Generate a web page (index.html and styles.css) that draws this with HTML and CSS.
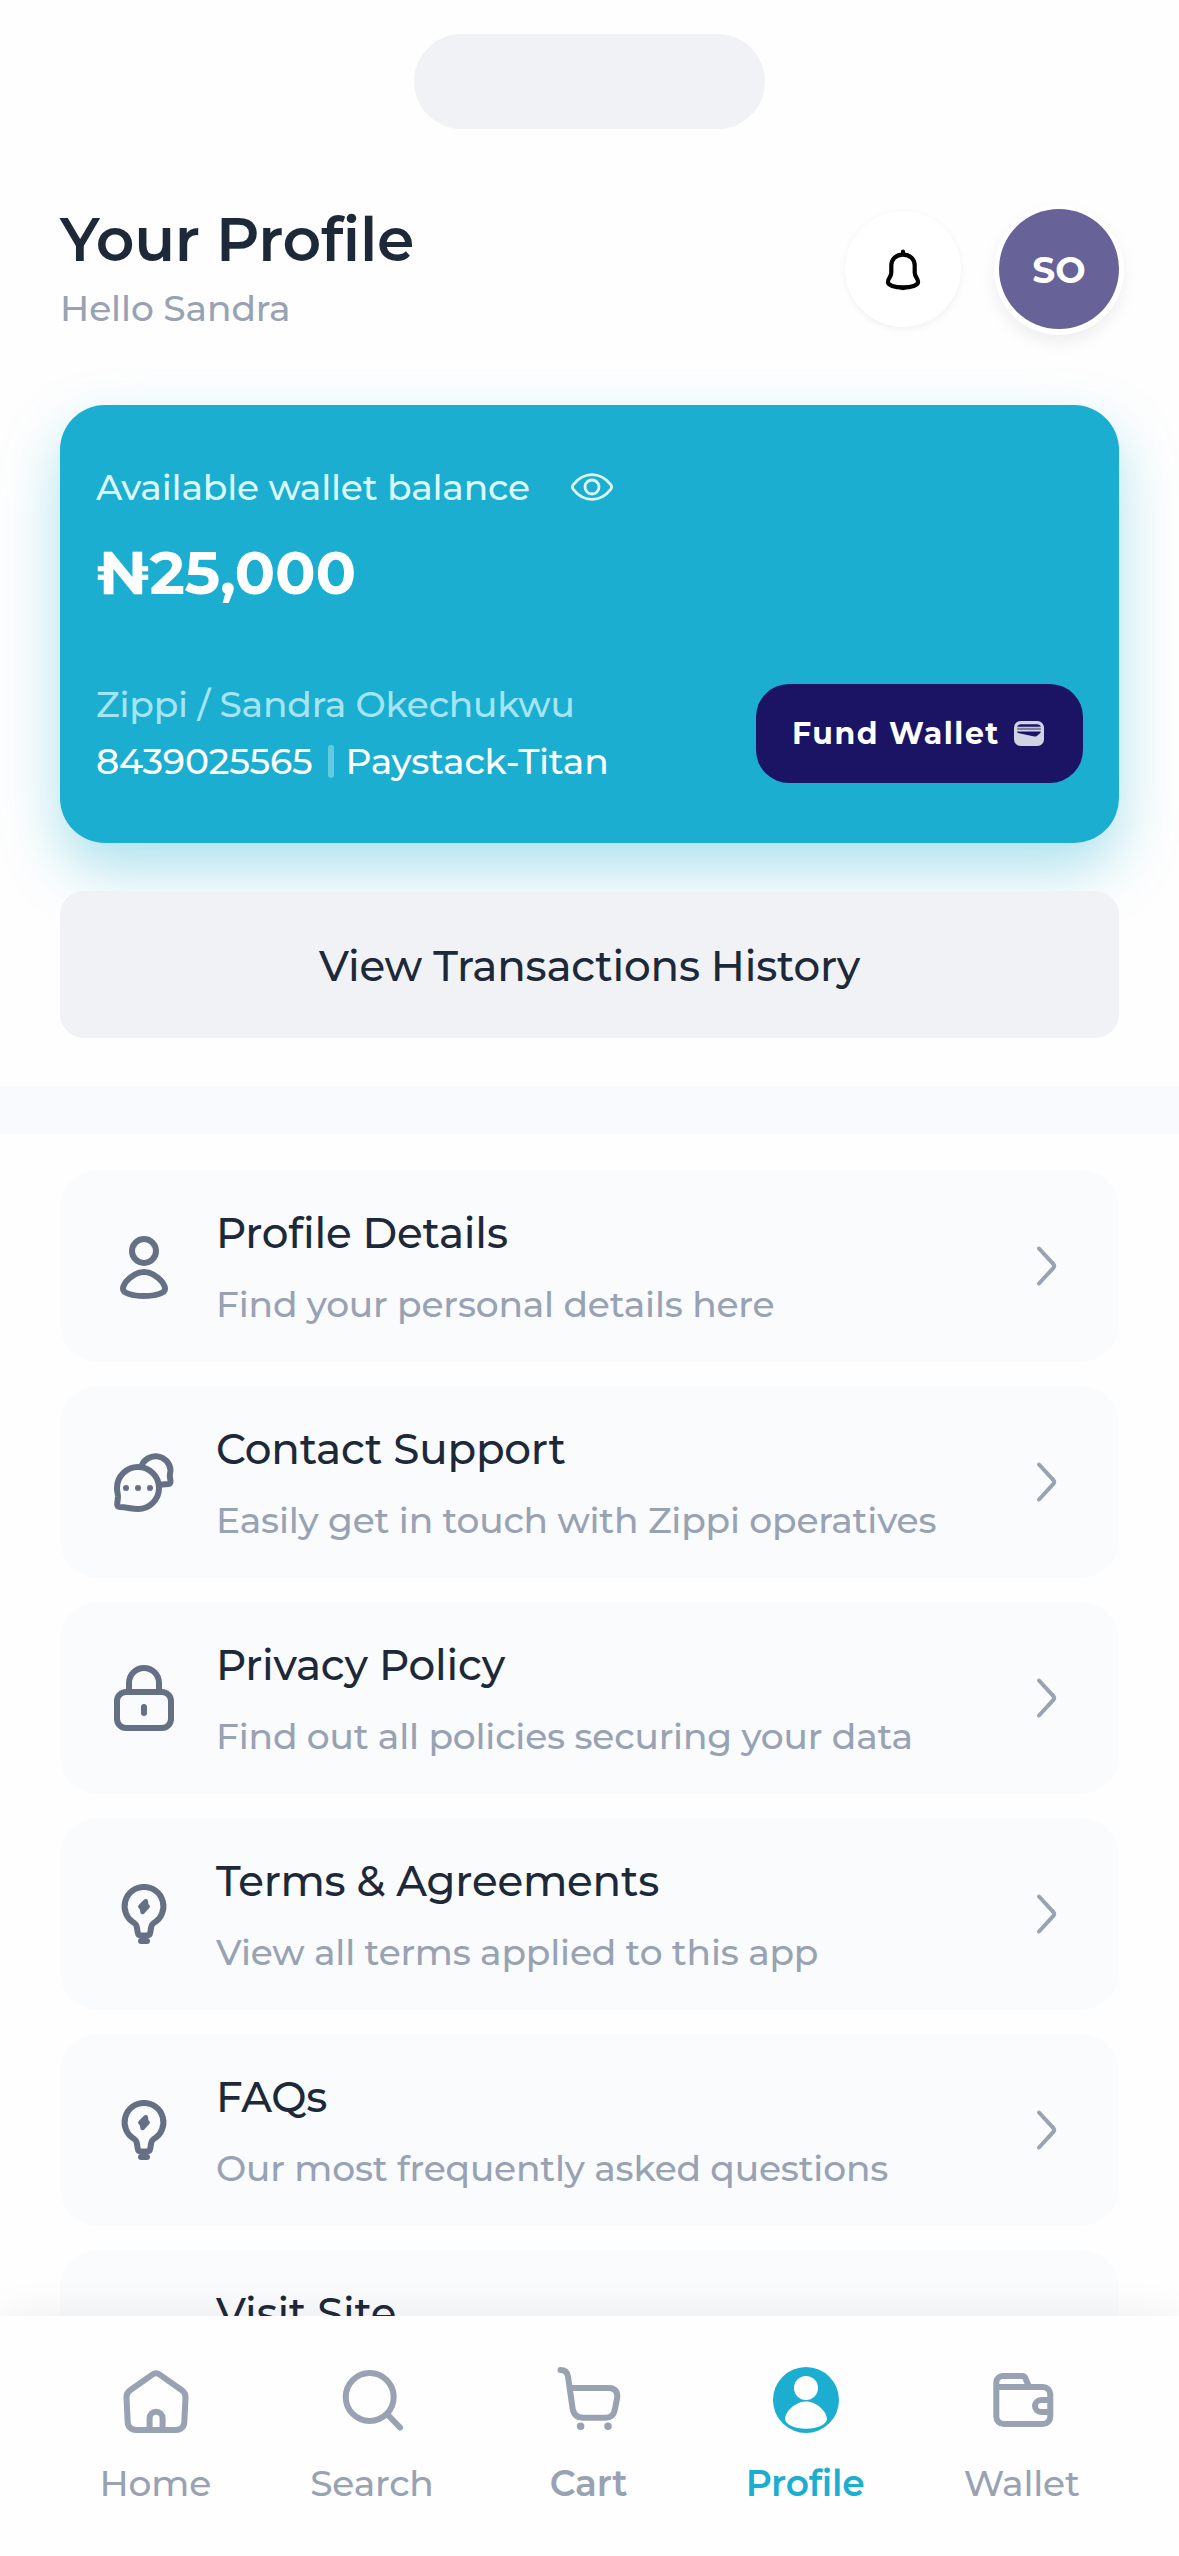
FILE: index.html
```html
<!DOCTYPE html>
<html lang="en">
<head>
<meta charset="utf-8">
<title>Your Profile</title>
<link rel="stylesheet" href="styles.css">
</head>
<body>
<svg class="defs" width="0" height="0" aria-hidden="true">
  <symbol id="chevron" viewBox="0 0 24 42"><path d="M4 3.500l14.200 15.300c1.300 1.500 1.300 2.900 0 4.400L4 38.500"/></symbol>
  <symbol id="bulb" viewBox="0 0 72 72">
    <path d="M36 9a19.300 19.300 0 0 0-9.800 36c1.800 1.100 2.300 2.300 2.600 4.100l1 5.700c.4 2.200 1.200 2.700 2.900 2.700h6.600c1.700 0 2.500-.5 2.900-2.700l1-5.700c.3-1.800.8-3 2.600-4.100A19.300 19.300 0 0 0 36 9z"/>
    <path d="M33 63h6"/>
    <path class="solid" d="M37.800 23.200l-5.400 5.500 1.600 1.300.6 4 5-5.500-1.500-1.200z" stroke-width="4.600"/>
  </symbol>
</svg>
<div class="screen">
  <div class="status"><div class="island"></div></div>

  <header class="header">
    <div class="heading">
      <h1 class="title">Your Profile</h1>
      <p class="greeting">Hello Sandra</p>
    </div>
    <div class="actions">
      <button class="bell" aria-label="Notifications">
        <svg class="icon72" viewBox="0 0 72 72" fill="none" stroke="#000" stroke-width="4.2" stroke-linecap="round" stroke-linejoin="round">
          <path d="M36 18.700v3M36 21.700c-7.200 0-11.700 4.700-11.700 10.800v7c0 4.500-3.400 5.500-3.400 9.600 0 3.200 6.600 5.200 15.100 5.200s15.100-2 15.100-5.200c0-4.100-3.400-5.100-3.400-9.600v-7c0-6.100-4.500-10.800-11.700-10.800z"/>
          <path d="M30 54.300c2 .4 3.700 1.900 6 1.900s4-1.500 6-1.900z" fill="#000" stroke-width="2"/>
        </svg>
      </button>
      <div class="avatar">SO</div>
    </div>
  </header>

  <section class="wallet">
    <div class="balance">
      <div class="balance-label">Available wallet balance
        <svg class="eye" viewBox="0 0 42 28" fill="none" stroke="currentColor" stroke-width="2.8"><path d="M2.300 11.600C7.500 5 13.800 1.600 21 1.600S34.500 5 39.700 11.600c1.200 1.700 1.200 3.100 0 4.800C34.500 23 28.200 26.400 21 26.400S7.500 23 2.300 16.400c-1.200-1.700-1.200-3.100 0-4.800z"/><circle cx="21" cy="14" r="7"/></svg>
      </div>
      <div class="amount">₦25,000</div>
    </div>
    <div class="wallet-foot">
      <div class="account">
        <div class="owner">Zippi / Sandra Okechukwu</div>
        <div class="bank"><span>8439025565</span><i class="divider"></i><span>Paystack-Titan</span></div>
      </div>
      <button class="fund">Fund Wallet
        <svg class="fund-icon" viewBox="0 0 30 25"><rect width="30" height="25" rx="6.500" fill="#d0d3e2"/><path d="M3.200 5.800C3.500 4 5 3.200 7 3.200h16c2 0 3.500.8 3.800 2.600z" fill="#1b1464"/><path d="M3.200 6.800h23.600v2.200H3.200z" fill="#1b1464" opacity=".45"/><path d="M3.200 10.400h23.600c0 .8-.3 1.300-1 2l-3 2.600c-.8.600-1.500.7-2.500.4L3.900 11.900c-.5-.1-.7-.6-.7-1.500z" fill="#1b1464"/></svg>
      </button>
    </div>
  </section>

  <button class="history">View Transactions History</button>
  <div class="band"></div>

  <main class="list">
    <a class="item">
      <svg class="icon72 glyph" viewBox="0 0 72 72"><circle cx="36" cy="21" r="12"/><path d="M36 42c10 0 21 10.500 21 17 0 4-9 7-21 7s-21-3-21-7c0-6.500 11-17 21-17z"/></svg>
      <div class="copy"><div class="name">Profile Details</div><div class="hint">Find your personal details here</div></div>
      <svg class="chevron"><use href="#chevron"/></svg>
    </a>
    <a class="item">
      <svg class="icon72 glyph" viewBox="0 0 72 72"><path d="M30 63a21 21 0 1 0-21-21c0 4.500 1.200 6.500 1 9l-.8 7c-.2 2.300.8 3 2.800 3 7 0 10.500 2 18 2z"/><path d="M33.500 20a15 15 0 0 1 29 4c0 3-1.100 4-.6 7l.6 4c.2 2-.6 3-2.200 3.100l-8.300.7"/><path d="M18 42h.01M30 42h.01M42 42h.01"/></svg>
      <div class="copy"><div class="name">Contact Support</div><div class="hint">Easily get in touch with Zippi operatives</div></div>
      <svg class="chevron"><use href="#chevron"/></svg>
    </a>
    <a class="item">
      <svg class="icon72 glyph" viewBox="0 0 72 72"><rect x="9" y="30" width="54" height="36" rx="9"/><path d="M21 30v-9a15 15 0 0 1 30 0v9M36 45v6"/></svg>
      <div class="copy"><div class="name">Privacy Policy</div><div class="hint">Find out all policies securing your data</div></div>
      <svg class="chevron"><use href="#chevron"/></svg>
    </a>
    <a class="item">
      <svg class="icon72 glyph"><use href="#bulb"/></svg>
      <div class="copy"><div class="name">Terms &amp; Agreements</div><div class="hint">View all terms applied to this app</div></div>
      <svg class="chevron"><use href="#chevron"/></svg>
    </a>
    <a class="item">
      <svg class="icon72 glyph"><use href="#bulb"/></svg>
      <div class="copy"><div class="name">FAQs</div><div class="hint">Our most frequently asked questions</div></div>
      <svg class="chevron"><use href="#chevron"/></svg>
    </a>
    <a class="item">
      <div class="icon72"></div>
      <div class="copy"><div class="name">Visit Site</div></div>
    </a>
  </main>

  <nav class="tabs">
    <a class="tab">
      <svg class="icon72 line" viewBox="0 0 72 72"><path d="M32.300 10.600L9.400 26.800C7 28.800 6.300 31 6.500 34l1.200 24c.3 5 3.500 8 8.300 8h40c4.800 0 8-3 8.300-8l1.200-24c.2-3-.5-5.200-2.900-7.200L39.700 10.600c-2.600-1.900-4.800-1.900-7.400 0z"/><path d="M29.600 65V54.200a6.500 6.500 0 0 1 13 0V65"/></svg>
      <span>Home</span>
    </a>
    <a class="tab">
      <svg class="icon72 line" viewBox="0 0 72 72"><circle cx="32.700" cy="33" r="24"/><path d="M50.500 50.500l12.500 13"/></svg>
      <span>Search</span>
    </a>
    <a class="tab bold">
      <svg class="icon72 line" viewBox="0 0 72 72"><path d="M7.500 6c4 0 6.800 2 7.500 6.500l4.600 32c1 6 4.500 9.300 10.800 9.300h22c5.500 0 8.300-2.300 9.300-7.500l2.400-12c1-6-2-10.300-8-10.300H17"/><path d="M27.600 62.300h.01M55 62.300h.01" stroke-width="7.500"/></svg>
      <span>Cart</span>
    </a>
    <a class="tab bold active">
      <svg class="icon72" viewBox="0 0 72 72"><circle cx="36" cy="36" r="33" fill="#1baed0"/><circle cx="36" cy="24" r="12" fill="#fff"/><path d="M36 37.500c11 0 21 10.500 21 17.500 0 5-9 9.700-21 9.700s-21-4.700-21-9.700c0-7 10-17.500 21-17.500z" fill="#fff"/></svg>
      <span>Profile</span>
    </a>
    <a class="tab">
      <svg class="icon72 line" viewBox="0 0 72 72"><path d="M9.300 19v33.500a7.500 7.500 0 0 0 7.500 7.500h39a7.500 7.500 0 0 0 7.500-7.500V30.500a7.500 7.500 0 0 0-7.500-7.500h-46.500v-4.500a6.500 6.500 0 0 1 6.500-6.500h19.500c1.600 0 2.400.6 3 2l3 7"/><path d="M62 36h-8a6 6 0 0 0 0 12h8"/></svg>
      <span>Wallet</span>
    </a>
  </nav>
</div>
</body>
</html>
```
FILE: styles.css
```css
* { box-sizing: border-box; }

body {
  margin: 0;
  background: #fefefe;
  font-family: Montserrat, Inter, sans-serif;
  color: #1d2939;
}

h1, p { margin: 0; }

button {
  border: 0;
  padding: 0;
  font: inherit;
  color: inherit;
}

.defs { display: block; }

.screen {
  width: 1179px;
  height: 2556px;
  overflow: hidden;
  display: flex;
  flex-direction: column;
}

.icon72 { width: 72px; height: 72px; flex: none; display: block; }

/* Top area */
.status {
  display: flex;
  justify-content: center;
  padding-top: 34px;
  height: 204px;
  flex: none;
}

.island { width: 351px; height: 95px; border-radius: 48px; background: #f0f2f6; }

.header {
  display: flex;
  justify-content: space-between;
  align-items: center;
  height: 130px;
  flex: none;
  padding: 0 60px;
}

.heading { align-self: flex-start; }
.title { font-size: 60px; line-height: 72px; font-weight: 600; letter-spacing: -0.3px; }
.greeting { margin-top: 10px; font-size: 36px; line-height: 44px; font-weight: 500; letter-spacing: -0.1px; color: #98a2b3; }

.actions { display: flex; align-items: center; gap: 38px; }

.bell {
  width: 116px;
  height: 116px;
  border-radius: 50%;
  background: #fff;
  display: grid;
  place-items: center;
  box-shadow: 0 2px 7px rgba(16, 24, 40, .06);
}

.avatar {
  width: 120px;
  height: 120px;
  border-radius: 50%;
  background: #676297;
  color: #fff;
  display: grid;
  place-items: center;
  padding-top: 2px;
  font-size: 36px;
  font-weight: 700;
  box-shadow: 0 1px 0 5px #fff, 0 9px 18px 3px rgba(16, 24, 40, .08);
}

/* Wallet card */
.wallet {
  margin: 71px 60px 0;
  height: 438px;
  flex: none;
  padding: 60px 36px;
  border-radius: 45px;
  background: #1baed0;
  color: #fff;
  display: flex;
  flex-direction: column;
  justify-content: space-between;
  box-shadow: 0 26px 58px rgba(27, 174, 208, .36);
}

.balance-label {
  display: flex;
  align-items: center;
  gap: 41px;
  font-size: 36px;
  line-height: 44px;
  font-weight: 500;
  letter-spacing: -0.18px;
  color: #dcf8fd;
}

.eye { width: 42px; height: 28px; }
.amount { margin-top: 28px; font-size: 60px; line-height: 72px; font-weight: 700; letter-spacing: -0.3px; }

.wallet-foot { display: flex; justify-content: space-between; align-items: flex-end; }
.account { font-size: 36px; line-height: 44px; font-weight: 500; letter-spacing: -0.18px; }
.owner { color: #a5e5f3; }
.bank { display: flex; align-items: center; margin-top: 13px; }
.divider { width: 6px; height: 33px; border-radius: 3px; margin: 0 12px 0 15px; background: #62cbe1; }

.fund {
  width: 327px;
  height: 99px;
  border-radius: 33px;
  background: #1b1464;
  color: #fff;
  display: flex;
  align-items: center;
  justify-content: center;
  gap: 14px;
  padding-right: 3px;
  font-size: 30px;
  font-weight: 700;
  letter-spacing: 1.5px;
}

.fund-icon { width: 30px; height: 25px; }

.history {
  margin: 48px 60px 0;
  height: 147px;
  flex: none;
  padding-top: 2px;
  border-radius: 24px;
  background: #f0f2f5;
  font-size: 42px;
  font-weight: 500;
  letter-spacing: -0.21px;
}

.band { margin-top: 48px; height: 48px; flex: none; background: #f8fafd; }

/* Menu */
.list {
  flex: 1;
  min-height: 0;
  overflow: hidden;
  padding: 36px 60px 0;
  display: flex;
  flex-direction: column;
  gap: 24px;
}

.item {
  height: 192px;
  flex: none;
  border-radius: 38px;
  background: #f9fbfc;
  display: flex;
  align-items: center;
  padding: 0 60px 0 48px;
}

.copy { flex: 1; align-self: flex-start; margin: 37px 0 0 36px; }
.name { font-size: 42px; line-height: 52px; font-weight: 500; letter-spacing: -0.2px; }
.hint { margin-top: 23px; font-size: 36px; line-height: 44px; font-weight: 500; letter-spacing: -0.18px; color: #98a2b3; }

.glyph {
  fill: none;
  stroke: #667085;
  stroke-width: 6;
  stroke-linecap: round;
  stroke-linejoin: round;
}

.solid { fill: #667085; }

.chevron {
  width: 24px;
  height: 42px;
  fill: none;
  stroke: #98a2b3;
  stroke-width: 4;
  stroke-linecap: round;
}

/* Tab bar */
.tabs {
  position: relative;
  height: 240px;
  flex: none;
  padding: 48px 48px 0;
  background: #fefefe;
  display: grid;
  grid-template-columns: repeat(5, 1fr);
  box-shadow: 0 -4px 36px rgba(16, 24, 40, .06);
}

.tab {
  display: flex;
  flex-direction: column;
  align-items: center;
  gap: 25px;
  font-size: 36px;
  line-height: 44px;
  font-weight: 500;
  letter-spacing: -0.18px;
  color: #98a2b3;
}

.tab span { margin-right: 2px; }

.bold { font-weight: 600; }
.active { color: #1baed0; }

.line {
  fill: none;
  stroke: #98a2b3;
  stroke-width: 6;
  stroke-linecap: round;
  stroke-linejoin: round;
}
```
